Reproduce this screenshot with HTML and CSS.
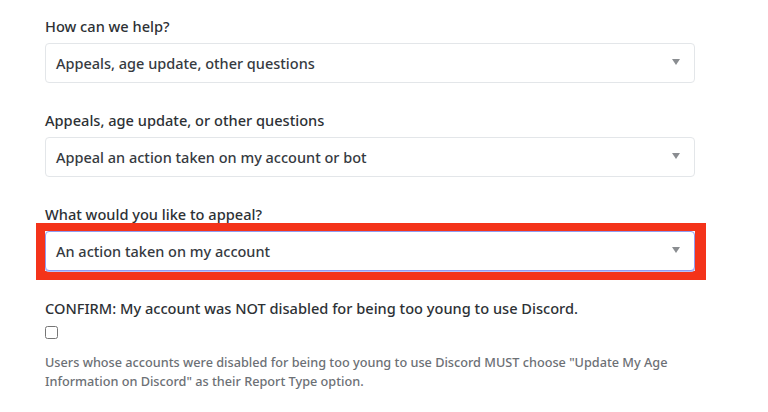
FILE: index.html
```html
<!DOCTYPE html>
<html lang="en">

<head>
	<meta charset="UTF-8">
	<meta name="viewport" content="width=device-width, initial-scale=1.0">
	<title>Submit a request</title>
	<link rel="stylesheet" href="styles.css">
</head>

<body>
	<form class="request-form">
		<div class="field">
			<label class="field-label">How can we help?</label>
			<div class="select">
				<span class="select-value">Appeals, age update, other questions</span>
				<span class="select-arrow"></span>
			</div>
		</div>

		<div class="field">
			<label class="field-label">Appeals, age update, or other questions</label>
			<div class="select">
				<span class="select-value">Appeal an action taken on my account or bot</span>
				<span class="select-arrow"></span>
			</div>
		</div>

		<div class="field">
			<label class="field-label">What would you like to appeal?</label>
			<!-- red box is the screenshot annotation -->
			<div class="annotation">
				<div class="select select-focused">
					<span class="select-value">An action taken on my account</span>
					<span class="select-arrow"></span>
				</div>
			</div>
		</div>

		<div class="field">
			<label class="field-label" for="confirm-age">CONFIRM: My account was NOT disabled for being too young to use Discord.</label>
			<input type="checkbox" id="confirm-age" class="checkbox">
			<p class="field-hint">Users whose accounts were disabled for being too young to use Discord MUST choose "Update My Age Information on Discord" as their Report Type option.</p>
		</div>
	</form>
</body>

</html>
```

FILE: styles.css
```css
body {
	margin: 0;
	background-color: #fff;
	font-family: 'Noto Sans', sans-serif;
	color: #2d3135;
}

.request-form {
	width: 650px;
	padding: 16px 0 0 45px;
}

.field {
	margin-bottom: 27px;
}

.field-label {
	display: block;
	font-size: 14.6px;
	font-weight: 500;
	line-height: 20px;
	margin-bottom: 7px;
}

.select {
	display: flex;
	align-items: center;
	justify-content: space-between;
	box-sizing: border-box;
	height: 40px;
	padding: 0 14px 0 10px;
	border: 1px solid #e3e6e9;
	border-radius: 4px;
	background-color: #fff;
	font-size: 14.5px;
	font-weight: 500;
	color: #363a3f;
}

.select-arrow {
	width: 0;
	height: 0;
	border-left: 4px solid transparent;
	border-right: 4px solid transparent;
	border-top: 6px solid #8a8d91;
	margin-bottom: 2px;
}

.select-focused {
	border-color: #8f9cf2;
	box-shadow: 0 1px 0 0 #b7c0f7;
}

.annotation {
	margin: -8px -11px -9px -9px;
	border: 9px solid #f4331a;
	border-top-width: 8px;
	border-right-width: 11px;
}

.checkbox {
	display: block;
	width: 13px;
	height: 13px;
	margin: 8px 0 0 0;
}

.field-hint {
	margin: 14px 0 0 0;
	font-size: 12.7px;
	font-weight: 500;
	line-height: 19px;
	color: #6c7075;
}
```
